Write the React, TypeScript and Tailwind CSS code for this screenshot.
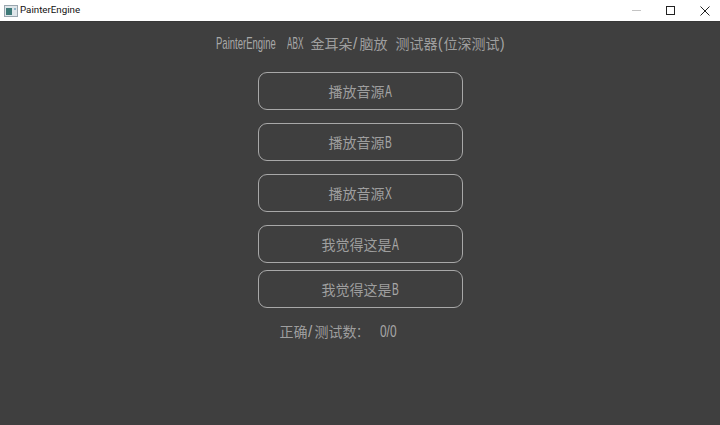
const cjk = "font-['Noto_Sans_CJK_SC',sans-serif] font-normal";

function L({ t, w, s = "scale-x-[0.56]" }: { t: string; w: number; s?: string }) {
  return (
    <span className="inline-block overflow-visible whitespace-pre align-baseline" style={{ width: w }}>
      <span className={`inline-block origin-left ${s} font-['Liberation_Sans',sans-serif] text-[17px] leading-none text-[#a8a8a8]`}>{t}</span>
    </span>
  );
}

function Btn({ cjkText, latin, mt }: { cjkText: string; latin: string; mt: string }) {
  return (
    <button className={`${mt} flex h-[38px] w-[205px] items-center justify-center rounded-[9px] border border-[#a8a8a8] text-[14px] text-[#9e9e9e] ${cjk}`}>
      <span className="whitespace-pre">{cjkText}<L t={latin} w={7} s="scale-x-[0.6]" /></span>
    </button>
  );
}

export default function App() {
  return (
    <div className="flex h-[425px] w-[720px] flex-col overflow-hidden bg-[#3f3f3f]">
      <div className="flex h-[22px] items-center border-b border-b-[#383838] bg-white">
        <svg width="14" height="12" viewBox="0 0 14 12" className="ml-[4px]">
          <rect x="0.5" y="0.5" width="13" height="11" fill="#dfe6ea" stroke="#9aa6af" />
          <rect x="2" y="3" width="6" height="7" fill="#3e7a78" />
          <rect x="10" y="3" width="2" height="2" fill="#8fb5c9" />
        </svg>
        <span className="ml-[2px] font-['Roboto',sans-serif] text-[9.75px] text-[#111]">PainterEngine</span>
        <div className="ml-auto flex items-center">
          <div className="mr-[25px] h-px w-[9px] bg-[#c4c4c4]" />
          <svg width="9" height="9" viewBox="0 0 9 9" className="mr-[25px]"><rect x="0.5" y="0.5" width="8" height="8" fill="none" stroke="#222" /></svg>
          <svg width="10" height="10" viewBox="0 0 10 10" className="mr-[10px]"><path d="M0.5 0.5L9.5 9.5M9.5 0.5L0.5 9.5" stroke="#222" fill="none" /></svg>
        </div>
      </div>
      <div className="flex flex-col items-center">
        <div className={`mt-[9px] h-[24px] whitespace-pre text-[14px] leading-[24px] text-[#9e9e9e] ${cjk}`}>
          <L t="PainterEngine" w={71} /><L t="ABX" w={24} s="scale-x-[0.48]" />金耳朵<L t="/" w={7} s="scale-x-[0.9]" />脑放<span className="inline-block w-[8px]" />测试器<L t="(" w={6} s="scale-x-[0.8]" />位深测试<L t=")" w={5} s="scale-x-[0.8]" />
        </div>
        <Btn cjkText="播放音源" latin="A" mt="mt-[17px]" />
        <Btn cjkText="播放音源" latin="B" mt="mt-[13px]" />
        <Btn cjkText="播放音源" latin="X" mt="mt-[13px]" />
        <Btn cjkText="我觉得这是" latin="A" mt="mt-[13px]" />
        <Btn cjkText="我觉得这是" latin="B" mt="mt-[7px]" />
        <div className={`mt-[11px] ml-[-43px] h-[24px] whitespace-pre text-[14px] leading-[24px] text-[#9e9e9e] ${cjk}`}>
          正确<L t="/" w={7} s="scale-x-[0.9]" />测试数<L t=":" w={23} s="scale-x-[0.9]" /><L t="0/0" w={18} s="scale-x-[0.7]" />
        </div>
      </div>
    </div>
  );
}
